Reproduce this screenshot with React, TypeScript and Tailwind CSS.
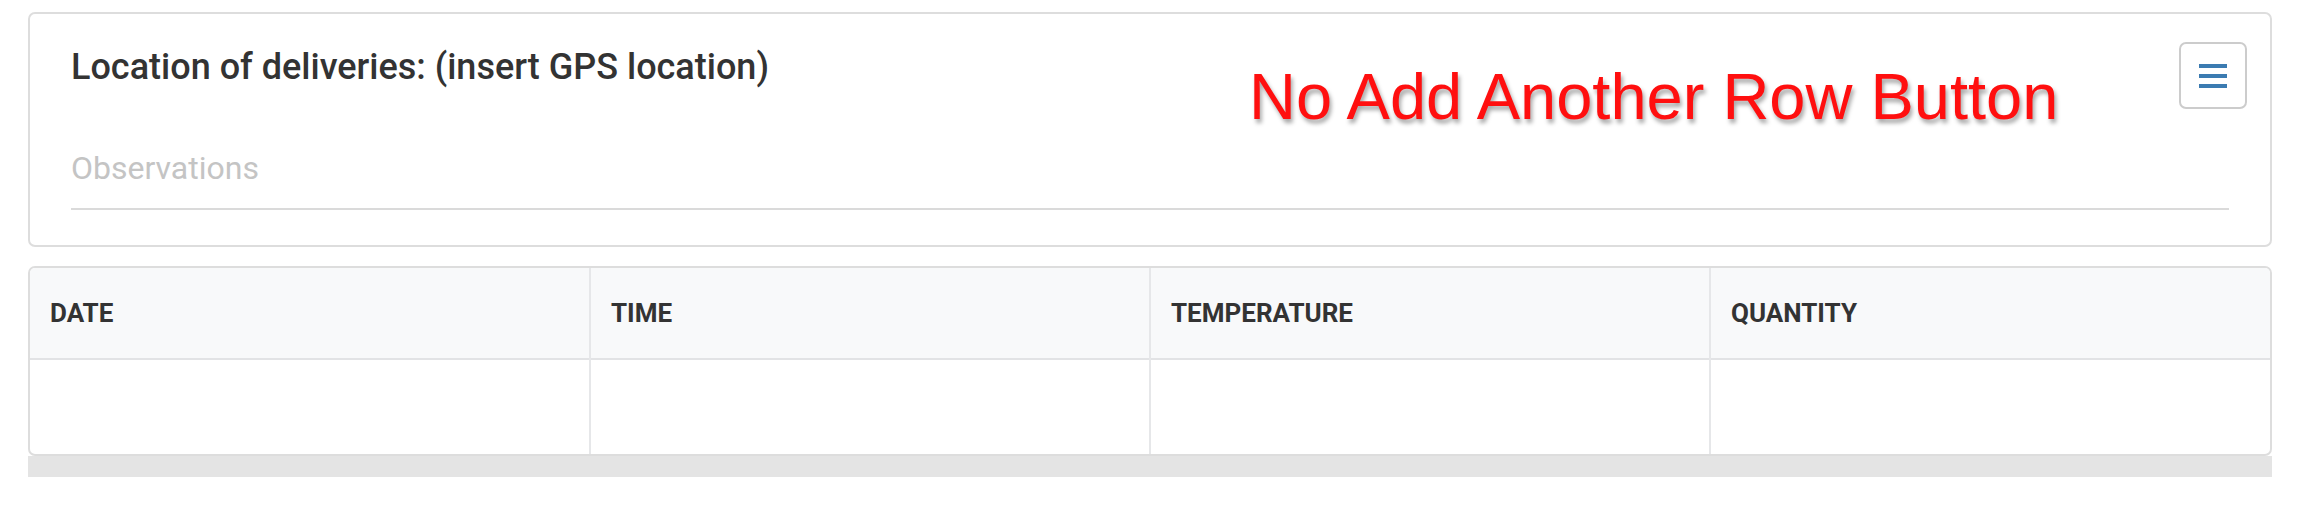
import React from 'react';

const columns = ['DATE', 'TIME', 'TEMPERATURE', 'QUANTITY'];

const MenuButton: React.FC = () => (
  <button
    type="button"
    className="absolute top-[28px] right-[23px] w-[68px] h-[67px] rounded-[7px] border-2 border-[#cccccc] bg-white flex flex-col items-center justify-center gap-[6px]"
  >
    <span className="block w-[28px] h-[4px] bg-[#3b7bb1]"></span>
    <span className="block w-[28px] h-[4px] bg-[#3b7bb1]"></span>
    <span className="block w-[28px] h-[4px] bg-[#3b7bb1]"></span>
  </button>
);

export default function App() {
  return (
    <div className="w-[2303px] h-[522px] bg-white pl-[28px] pr-[31px] pt-[12px] font-['Roboto',sans-serif]">
      {/* panel with location + observations */}
      <div className="relative border-2 border-[#dddddd] rounded-[7px] bg-white px-[41px] pt-[26px] pb-[35px]">
        <h2 className="text-[36px] leading-[54px] font-medium text-[#333333]">
          Location of deliveries: (insert GPS location)
        </h2>
        <input
          type="text"
          placeholder="Observations"
          className="mt-[50px] block w-full h-[48px] text-[32px] leading-[48px] text-[#333333] placeholder:text-[#c4c4c4] outline-none bg-transparent"
        />
        <div className="mt-[16px] h-[2px] bg-[#dadada]"></div>

        <span className="absolute left-[1219px] top-[50px] text-[65px] leading-none text-[#ff0f0f] font-['Liberation_Sans',Arial,sans-serif] whitespace-nowrap [text-shadow:2px_4px_4px_rgba(0,0,0,0.35)]">
          No Add Another Row Button
        </span>

        <MenuButton />
      </div>

      {/* data grid */}
      <div className="mt-[19px]">
        <div className="border-2 border-[#dddddd] rounded-[7px] overflow-hidden bg-white">
          <table className="w-full table-fixed border-collapse">
            <thead>
              <tr className="bg-[#f8f9fa] border-b-2 border-[#e2e3e5]">
                {columns.map((col, idx) => (
                  <th
                    key={col}
                    className={`h-[91px] px-[20px] text-left text-[26px] font-bold text-[#333333] ${
                      idx > 0 ? 'border-l-2 border-[#e6e7e9]' : ''
                    }`}
                  >
                    {col}
                  </th>
                ))}
              </tr>
            </thead>
            <tbody>
              <tr>
                {columns.map((col, idx) => (
                  <td
                    key={col}
                    className={`h-[95px] ${idx > 0 ? 'border-l-2 border-[#e6e7e9]' : ''}`}
                  ></td>
                ))}
              </tr>
            </tbody>
          </table>
        </div>
        <div className="h-[21px] bg-[#e4e4e4]"></div>
      </div>
    </div>
  );
}
